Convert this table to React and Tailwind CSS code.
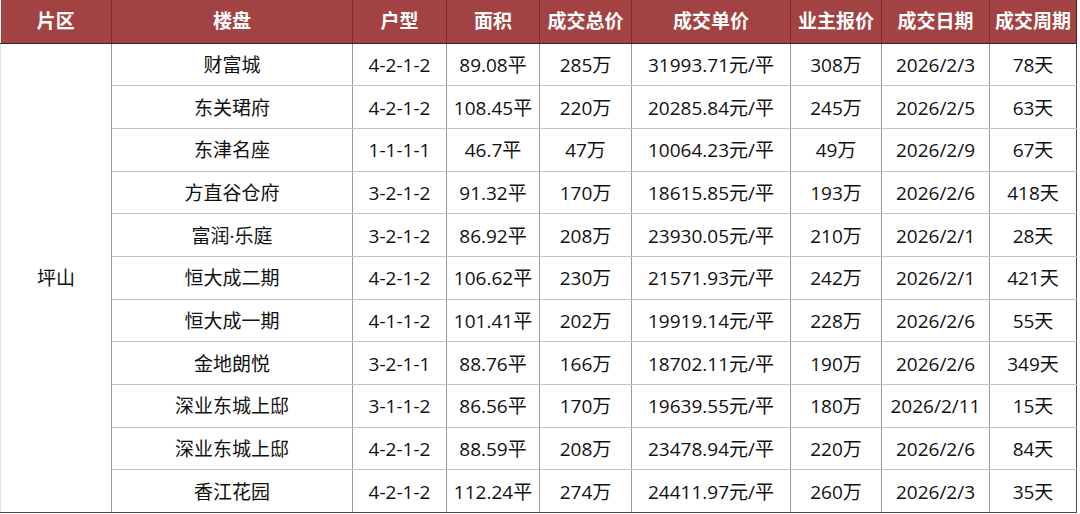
const rows = [
  ['财富城', '4-2-1-2', '89.08平', '285万', '31993.71元/平', '308万', '2026/2/3', '78天'],
  ['东关珺府', '4-2-1-2', '108.45平', '220万', '20285.84元/平', '245万', '2026/2/5', '63天'],
  ['东津名座', '1-1-1-1', '46.7平', '47万', '10064.23元/平', '49万', '2026/2/9', '67天'],
  ['方直谷仓府', '3-2-1-2', '91.32平', '170万', '18615.85元/平', '193万', '2026/2/6', '418天'],
  ['富润·乐庭', '3-2-1-2', '86.92平', '208万', '23930.05元/平', '210万', '2026/2/1', '28天'],
  ['恒大成二期', '4-2-1-2', '106.62平', '230万', '21571.93元/平', '242万', '2026/2/1', '421天'],
  ['恒大成一期', '4-1-1-2', '101.41平', '202万', '19919.14元/平', '228万', '2026/2/6', '55天'],
  ['金地朗悦', '3-2-1-1', '88.76平', '166万', '18702.11元/平', '190万', '2026/2/6', '349天'],
  ['深业东城上邸', '3-1-1-2', '86.56平', '170万', '19639.55元/平', '180万', '2026/2/11', '15天'],
  ['深业东城上邸', '4-2-1-2', '88.59平', '208万', '23478.94元/平', '220万', '2026/2/6', '84天'],
  ['香江花园', '4-2-1-2', '112.24平', '274万', '24411.97元/平', '260万', '2026/2/3', '35天'],
];

const headers = ['片区', '楼盘', '户型', '面积', '成交总价', '成交单价', '业主报价', '成交日期', '成交周期'];
const widths = [111, 241, 94, 93, 92, 159, 91, 108, 87];

export default function App() {
  return (
    <div className="w-[1080px] h-[514px] bg-white overflow-hidden" style={{ fontFamily: '"Open Sans", "Noto Sans CJK SC", sans-serif' }}>
      <table className="table-fixed border-collapse w-[1076px] text-[19px] text-[#111]">
        <colgroup>
          {widths.map((w, i) => <col key={i} style={{ width: w }} />)}
        </colgroup>
        <thead>
          <tr className="h-[43px] bg-[#a34242]">
            {headers.map((h, i) => (
              <th
                key={h}
                className={`font-bold text-white text-center p-0 border-b border-b-[#4a1e1e] ${i < headers.length - 1 ? 'border-r border-r-[#7a2c2c]' : 'border-r border-r-[#4a1e1e]'}`}
              >
                {h}
              </th>
            ))}
          </tr>
        </thead>
        <tbody>
          {rows.map((r, ri) => (
            <tr key={ri} className="h-[42.7px]">
              {ri === 0 && (
                <td rowSpan={rows.length} className="text-center p-0 border-r border-r-[#9a9a9a] border-b border-b-[#4a4a4a] border-l border-l-[#e6e6e6]">
                  坪山
                </td>
              )}
              {r.map((c, ci) => (
                <td
                  key={ci}
                  className={`text-center p-0 pt-[2px] leading-none whitespace-nowrap ${ri === rows.length - 1 ? 'border-b border-b-[#4a4a4a]' : 'border-b border-b-[#c4c4c4]'} ${ci === r.length - 1 ? 'border-r border-r-[#4a4a4a]' : 'border-r border-r-[#9a9a9a]'}`}
                >
                  {c}
                </td>
              ))}
            </tr>
          ))}
        </tbody>
      </table>
    </div>
  );
}
